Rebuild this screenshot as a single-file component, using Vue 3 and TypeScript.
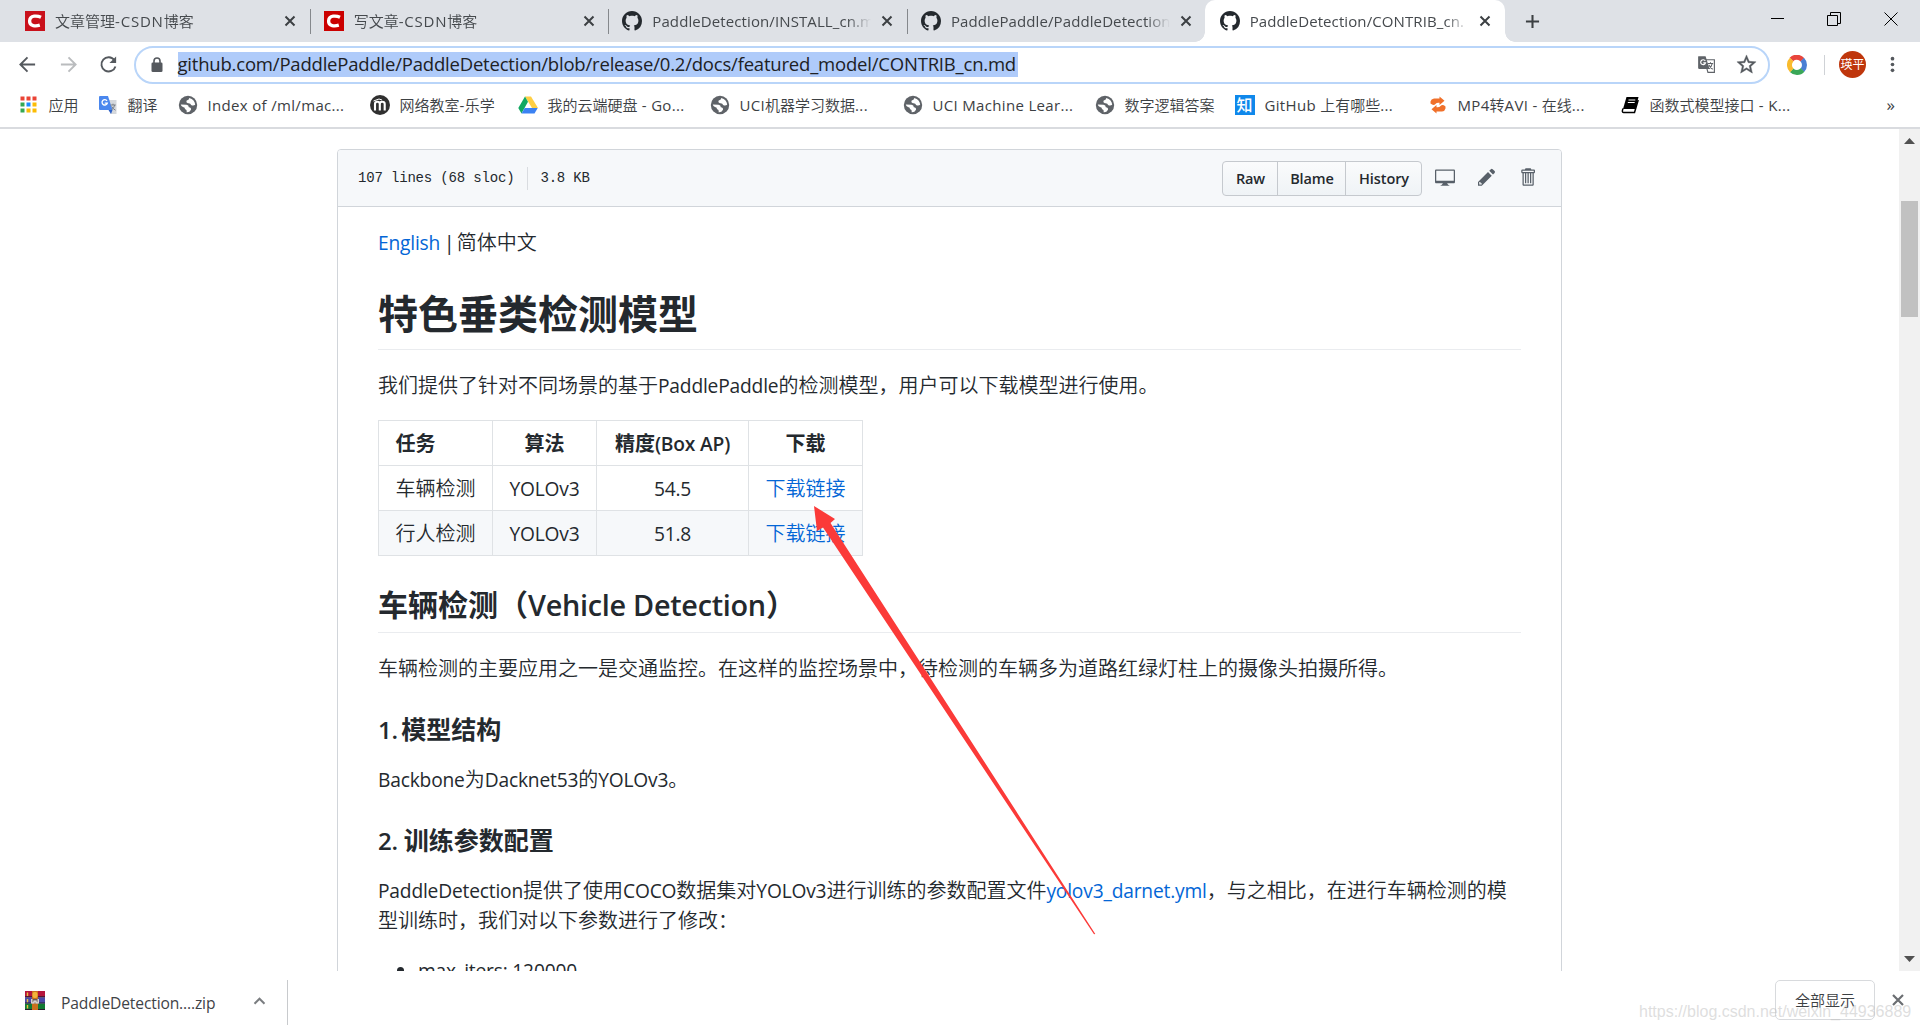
<script setup lang="ts">
import { h } from 'vue'

type IconName = 'apps' | 'gtrans' | 'globe' | 'moodle' | 'drive' | 'zhihu' | 'convert' | 'book'
interface Tab { title: string; icon: 'csdn' | 'csdn2' | 'github'; active?: boolean; sep?: boolean }
interface Bookmark { label: string; icon: IconName; width: number }

// Wraps the Latin runs of a mixed string so they can be sized apart from the CJK glyphs.
const Mix = (props: { t: string }) =>
  props.t.split(/([\x20-\x7e]+)/).filter(Boolean).map((run) =>
    /^[\x20-\x7e]+$/.test(run) ? h('span', { class: 'lat' }, run) : h('span', { class: 'cjk' }, run))
Mix.props = ['t']

const tabs: Tab[] = [
  { title: '文章管理-CSDN博客', icon: 'csdn' },
  { title: '写文章-CSDN博客', icon: 'csdn2', sep: true },
  { title: 'PaddleDetection/INSTALL_cn.m', icon: 'github', sep: true },
  { title: 'PaddlePaddle/PaddleDetection', icon: 'github', sep: true },
  { title: 'PaddleDetection/CONTRIB_cn.', icon: 'github', active: true },
]

const bookmarks: Bookmark[] = [
  { label: '应用', icon: 'apps', width: 79 },
  { label: '翻译', icon: 'gtrans', width: 80 },
  { label: 'Index of /ml/mac...', icon: 'globe', width: 192 },
  { label: '网络教室-乐学', icon: 'moodle', width: 148 },
  { label: '我的云端硬盘 - Go...', icon: 'drive', width: 192 },
  { label: 'UCI机器学习数据...', icon: 'globe', width: 193 },
  { label: 'UCI Machine Lear...', icon: 'globe', width: 192 },
  { label: '数字逻辑答案', icon: 'globe', width: 140 },
  { label: 'GitHub 上有哪些...', icon: 'zhihu', width: 193 },
  { label: 'MP4转AVI - 在线...', icon: 'convert', width: 192 },
  { label: '函数式模型接口 - K...', icon: 'book', width: 200 },
]

const rows = [
  { task: '车辆检测', algo: 'YOLOv3', ap: '54.5' },
  { task: '行人检测', algo: 'YOLOv3', ap: '51.8' },
]

const appColors = ['#ea4335', '#ea4335', '#ea4335', '#34a853', '#1a8cff', '#fbbc05', '#34a853', '#fbbc05', '#fbbc05']
const githubMark = 'M8 0C3.58 0 0 3.58 0 8c0 3.54 2.29 6.53 5.47 7.59.4.07.55-.17.55-.38 0-.19-.01-.82-.01-1.49-2.01.37-2.53-.49-2.69-.94-.09-.23-.48-.94-.82-1.13-.28-.15-.68-.52-.01-.53.63-.01 1.08.58 1.23.82.72 1.21 1.87.87 2.33.66.07-.52.28-.87.51-1.07-1.78-.2-3.64-.89-3.64-3.95 0-.87.31-1.59.82-2.15-.08-.2-.36-1.02.08-2.12 0 0 .67-.21 2.2.82.64-.18 1.32-.27 2-.27.68 0 1.36.09 2 .27 1.53-1.04 2.2-.82 2.2-.82.44 1.1.16 1.92.08 2.12.51.56.82 1.27.82 2.15 0 3.07-1.87 3.75-3.65 3.95.29.25.54.73.54 1.48 0 1.07-.01 1.93-.01 2.2 0 .21.15.46.55.38A8.013 8.013 0 0 0 16 8c0-4.42-3.58-8-8-8z'
</script>

<template>
  <div class="window">
    <div class="tabstrip">
      <div v-for="(tab, i) in tabs" :key="i" class="tab" :class="{ active: tab.active }">
        <i class="tab-sep" :class="{ on: tab.sep }"></i>
        <svg v-if="tab.icon !== 'github'" class="fav" viewBox="0 0 20 20">
          <rect width="20" height="20" :fill="tab.icon === 'csdn' ? '#c9101b' : '#cb0000'" />
          <path d="M16 6.200C12.500 4.600 5 3.900 4.600 9.800C4.300 15.500 11 15.300 14.800 14.200" fill="none" stroke="#fff" stroke-width="3.300" />
        </svg>
        <svg v-else class="fav" viewBox="0 0 16 16"><path :d="githubMark" fill="#24292e" /></svg>
        <span class="tab-title" :class="{ zh: tab.icon !== 'github' }"><Mix :t="tab.title" /></span>
        <svg class="tab-x" viewBox="0 0 12 12"><path d="M1.500 1.500L10.500 10.500M10.500 1.500L1.500 10.500" stroke="#3c4043" stroke-width="2" /></svg>
      </div>
      <svg class="newtab" viewBox="0 0 16 16"><path d="M8 1V15M1 8H15" stroke="#3c4043" stroke-width="2.200" /></svg>
      <div class="winctl">
        <svg width="14" height="14" viewBox="0 0 14 14"><path d="M1 6.500H14" stroke="#000" /></svg>
        <svg width="14" height="14" viewBox="0 0 14 14"><path d="M.5 3.500H10.500V13.500H.5ZM3.500 3.500V.5H13.500V11.500H10.500" fill="none" stroke="#000" /></svg>
        <svg width="14" height="14" viewBox="0 0 14 14"><path d="M.5 .5L13.500 13.500M13.500 .5L.5 13.500" stroke="#000" /></svg>
      </div>
    </div>

    <div class="toolbar">
      <svg class="nav" viewBox="0 0 20 20"><path d="M18 10H3M10 2.500L2.500 10L10 17.500" fill="none" stroke="#55595e" stroke-width="2" /></svg>
      <svg class="nav" viewBox="0 0 20 20"><path d="M2 10H17M10 2.500L17.500 10L10 17.500" fill="none" stroke="#babcbe" stroke-width="2" /></svg>
      <svg class="nav" viewBox="0 0 20 20"><path d="M16.200 5.500A7.500 7.500 0 1 0 17.300 12" fill="none" stroke="#55595e" stroke-width="2" /><path d="M18 1.500V8.500H11Z" fill="#55595e" /></svg>
      <div class="omnibox">
        <svg class="lock" viewBox="0 0 12 16"><rect x=".5" y="5.500" width="11" height="9.500" rx="1.300" fill="#55595e" /><path d="M3 6V4a3 3 0 0 1 6 0V6" fill="none" stroke="#55595e" stroke-width="1.600" /></svg>
        <span class="url"><Mix t="github.com/PaddlePaddle/PaddleDetection/blob/release/0.2/docs/featured_model/CONTRIB_cn.md" /></span>
        <svg class="otrans" viewBox="0 0 20 20">
          <path d="M8 5H18.300V18.300H11.500Z" fill="#fff" stroke="#5f6368" stroke-width="1.200" />
          <path d="M1.500 1.200H9L13.300 14.800H2.500Q1.200 14.800 1.200 13.500V2Q1.200 1.200 1.500 1.200Z" fill="#5f6368" />
          <path d="M8.700 6.200A2.600 2.600 0 1 0 9 8.300H6.600" fill="none" stroke="#fff" stroke-width="1.200" />
          <path d="M11.500 9H17M14.200 7.500V9M16 9Q15 13 12.500 14.500M12.600 10.500Q14 13.500 16.500 15" fill="none" stroke="#5f6368" stroke-width="1.100" />
        </svg>
        <svg class="star" viewBox="0 0 24 24"><path d="M22 9.240l-7.190-.62L12 2 9.190 8.630 2 9.240l5.460 4.730L5.820 21 12 17.270 18.180 21l-1.630-7.030L22 9.240zM12 15.400l-3.760 2.270 1-4.280-3.320-2.880 4.380-.38L12 6.100l1.710 4.040 4.380.38-3.320 2.880 1 4.280L12 15.400z" fill="#55595e" stroke="#55595e" stroke-width=".4" /></svg>
      </div>
      <svg class="ring" viewBox="0 0 20 20" fill="none" stroke-width="5">
        <path d="M4.400 4.400A7.500 7.500 0 0 1 15.500 4.900" stroke="#e8453c" />
        <path d="M15.200 4.600A7.500 7.500 0 0 1 15.300 15.300" stroke="#4a7fd4" />
        <path d="M15.500 15A7.500 7.500 0 0 1 4.600 15.200" stroke="#3aa757" />
        <path d="M4.800 15.400A7.500 7.500 0 0 1 4.700 4.600" stroke="#f9bb2d" />
      </svg>
      <i class="tsep"></i>
      <span class="avatar">瑛平</span>
      <svg class="menu" viewBox="0 0 6 20" fill="#55595e"><circle cx="3" cy="3" r="2.200" /><circle cx="3" cy="10" r="2.200" /><circle cx="3" cy="17" r="2.200" /></svg>
    </div>

    <div class="bookmarks">
      <div v-for="(b, i) in bookmarks" :key="i" class="bm" :style="{ width: b.width + 'px' }">
        <svg v-if="b.icon === 'apps'" class="bi" viewBox="0 0 20 20">
          <rect v-for="(c, n) in appColors" :key="n" :x="1.500 + (n % 3) * 6" :y="1.500 + Math.floor(n / 3) * 6" width="4" height="4" :fill="c" />
        </svg>
        <svg v-else-if="b.icon === 'gtrans'" class="bi" viewBox="0 0 20 20">
          <path d="M8 5H18.500V19H12.500Z" fill="#d5d8dc" />
          <path d="M2 1H10L14.500 15H2Q1 15 1 14V2Q1 1 2 1Z" fill="#4a87ee" />
          <path d="M14.500 15L10.500 15L13 19Z" fill="#2a5fc7" />
          <path d="M9 5.800A2.700 2.700 0 1 0 9.300 8.200H6.700" fill="none" stroke="#fff" stroke-width="1.300" />
          <path d="M12.500 10H17.700M15 8.700V10M16.700 10Q16 13 13.500 15M13.700 11.500Q15 14 17.500 15.200" fill="none" stroke="#7b8087" stroke-width="1" />
        </svg>
        <svg v-else-if="b.icon === 'globe'" class="bi" viewBox="0 0 20 20">
          <circle cx="10" cy="10" r="9.200" fill="#5f6368" />
          <path d="M2.800 9.600L8.500 9.800Q10.800 10.200 10.800 12.300Q13.400 12.600 13 14.700Q11.700 17.400 8.600 17.200Q9.200 14.600 7 14.200Q7.300 12.200 5 12Q3 11.600 2.800 9.600Z" fill="#fff" />
          <path d="M11.300 2.900Q11 5 8.700 5.600Q7.700 7.800 10 8.200Q12.500 7.800 13.100 9.900Q15.200 11.200 17.200 9.700Q16.800 4.700 11.300 2.900Z" fill="#fff" />
        </svg>
        <svg v-else-if="b.icon === 'moodle'" class="bi" viewBox="0 0 20 20">
          <circle cx="10" cy="10" r="10" fill="#303030" />
          <path d="M5 15.500V9Q5 6.800 7.300 6.800Q9.800 6.800 9.800 9V15.500M9.800 9Q9.800 6.800 12.200 6.800Q14.700 6.800 14.700 9V15.500" fill="none" stroke="#fff" stroke-width="2.100" />
          <path d="M3.500 6L9 4L12 5" fill="none" stroke="#fff" />
        </svg>
        <svg v-else-if="b.icon === 'drive'" class="bi" viewBox="0 0 20 20">
          <path d="M7 1.500H13L20 13H14Z" fill="#ffcf44" /><path d="M7 1.500L10 6.800L3.500 18.500L.3 13Z" fill="#11a861" /><path d="M6.700 13H19.700L16.500 18.500H3.500Z" fill="#3b82f3" />
        </svg>
        <span v-else-if="b.icon === 'zhihu'" class="bi zhihu">知</span>
        <svg v-else-if="b.icon === 'convert'" class="bi" viewBox="0 0 20 20">
          <path d="M2.500 8.500V6.500Q3 4 6 3.500H11.500V1.500L16.500 5.800L11.500 10V7.800Q8.500 7.500 7.500 9Q5.500 11 2.500 8.500Z" fill="#f0702a" />
          <path d="M17.500 11.500V13.500Q17 16 14 16.500H8.500V18.500L3.500 14.200L8.500 10V12.200Q11.500 12.500 12.500 11Q14.500 9 17.500 11.500Z" fill="#f0702a" />
        </svg>
        <svg v-else class="bi" viewBox="0 0 20 20">
          <path d="M6.500 2H18.500L15.500 14H3Z" fill="#000" /><path d="M3 13.500Q1.500 17.500 3.500 17.500H14.500L18.200 5" fill="none" stroke="#000" stroke-width="1.500" /><path d="M8.500 5H15.300M7.800 7.500H14.700" stroke="#fff" stroke-width="1" />
        </svg>
        <span class="bl"><Mix :t="b.label" /></span>
      </div>
      <span class="more">»</span>
    </div>

    <div class="viewport">
      <div class="page">
        <div class="box">
          <div class="box-head">
            <span class="mono">107 lines (68 sloc)</span><i class="fsep"></i><span class="mono">3.8 KB</span>
            <div class="btns"><span class="btn b1">Raw</span><span class="btn b2">Blame</span><span class="btn b3">History</span></div>
            <svg class="oct desktop" viewBox="0 0 16 16"><path d="M15 2H1c-.55 0-1 .45-1 1v9c0 .55.45 1 1 1h5.340c-.25.61-.86 1.390-2.340 2h8c-1.480-.61-2.090-1.390-2.340-2H15c.55 0 1-.45 1-1V3c0-.55-.45-1-1-1zm0 9H1V3h14v8z" /></svg>
            <svg class="oct pencil" viewBox="0 0 14 16"><path d="M0 12v3h3l8-8-3-3-8 8zm3 2H1v-2h1v1h1v1zm10.300-9.300L12 6 9 3l1.300-1.300a.996.996 0 0 1 1.410 0l1.590 1.590c.39.39.39 1.020 0 1.410z" /></svg>
            <svg class="oct trash" viewBox="0 0 12 16"><path d="M11 2H9c0-.55-.45-1-1-1H5c-.55 0-1 .45-1 1H2c-.55 0-1 .45-1 1v1c0 .55.45 1 1 1v9c0 .55.45 1 1 1h7c.55 0 1-.45 1-1V5c.55 0 1-.45 1-1V3c0-.55-.45-1-1-1zm-1 12H3V5h1v8h1V5h1v8h1V5h1v8h1V5h1v9zm1-10H2V3h9v1z" /></svg>
          </div>
          <article class="md">
            <p class="langs"><a><Mix t="English" /></a><span class="bar"> | </span><Mix t="简体中文" /></p>
            <h1>特色垂类检测模型</h1>
            <p><Mix t="我们提供了针对不同场景的基于PaddlePaddle的检测模型，用户可以下载模型进行使用。" /></p>
            <table>
              <thead><tr><th>任务</th><th>算法</th><th><Mix t="精度(Box AP)" /></th><th>下载</th></tr></thead>
              <tbody>
                <tr v-for="r in rows" :key="r.task">
                  <td><Mix :t="r.task" /></td><td><Mix :t="r.algo" /></td><td><Mix :t="r.ap" /></td><td><a><Mix t="下载链接" /></a></td>
                </tr>
              </tbody>
            </table>
            <h2><Mix t="车辆检测（Vehicle Detection）" /></h2>
            <p><Mix t="车辆检测的主要应用之一是交通监控。在这样的监控场景中，待检测的车辆多为道路红绿灯柱上的摄像头拍摄所得。" /></p>
            <h3 class="first"><Mix t="1. 模型结构" /></h3>
            <p><Mix t="Backbone为Dacknet53的YOLOv3。" /></p>
            <h3><Mix t="2. 训练参数配置" /></h3>
            <p><Mix t="PaddleDetection提供了使用COCO数据集对YOLOv3进行训练的参数配置文件" /><a><Mix t="yolov3_darnet.yml" /></a><Mix t="，与之相比，在进行车辆检测的模" /><br /><Mix t="型训练时，我们对以下参数进行了修改：" /></p>
            <ul><li><Mix t="max_iters: 120000" /></li></ul>
          </article>
        </div>
      </div>
      <div class="scroll">
        <svg width="11" height="6" viewBox="0 0 11 6"><path d="M5.500 0L11 6H0Z" fill="#505050" /></svg>
        <i class="thumb"></i>
        <svg class="down" width="11" height="6" viewBox="0 0 11 6"><path d="M0 0H11L5.500 6Z" fill="#505050" /></svg>
      </div>
    </div>

    <div class="shelf">
      <svg class="zip" viewBox="0 0 20 19">
        <rect width="20" height="6.300" fill="#b5153c" /><rect y="6.300" width="20" height="6.300" fill="#4a4aa8" /><rect y="12.600" width="20" height="6.400" fill="#127a33" />
        <path d="M0 5.800H20M0 12H20M0 18.500H20" stroke="#2b1a2e" /><path d="M2.500 1.500V5M2.500 8V11.300M2.500 14V17.500" stroke="#e8c040" stroke-width="1.400" />
        <rect x="7" width="6" height="19" fill="#c9701d" /><rect x="7.500" y="1" width="5" height="6" rx="2" fill="#f3b53a" />
        <rect x="6" y="8" width="8" height="4.500" fill="#6a5a50" /><path d="M6.800 8V12H9V10H11V12H13.200V8" fill="none" stroke="#f2f2f2" stroke-width="1.200" />
      </svg>
      <span class="fname"><Mix t="PaddleDetection....zip" /></span>
      <svg class="caret" viewBox="0 0 12 8"><path d="M1 6.700L6 1.700L11 6.700" fill="none" stroke="#7a7d80" stroke-width="2" /></svg>
      <i class="ssep"></i>
      <span class="showall"><Mix t="全部显示" /></span>
      <svg class="sx" viewBox="0 0 12 12"><path d="M1 1L11 11M11 1L1 11" stroke="#6b6e72" stroke-width="2.200" /></svg>
    </div>

    <svg class="arrow" viewBox="814 506 282 429"><path d="M814 506L835 519L830.500 523L1095.300 934L1094 934.300L823 527.500L817 531Z" fill="#fb3a38" /></svg>
    <span class="watermark">https://blog.csdn.net/weixin_44936889</span>
  </div>
</template>

<style>
body { margin: 0; overflow: hidden; }
.lat { font-size: .96em; letter-spacing: -.0095em; white-space: pre; }
.cjk { font-weight: 350; }
h2 .cjk, h3 .cjk, th .cjk { font-weight: inherit; }
.tab-title .lat { font-size: 1em; letter-spacing: .1px; }
.tab-title.zh .lat { letter-spacing: .8px; }
.bl .lat { font-size: 1em; letter-spacing: .33px; }
.url .lat { font-size: 1em; letter-spacing: -.2px; }
h3.first .lat { word-spacing: -2.500px; }
</style>

<style scoped>
.window { position: relative; width: 1920px; height: 1030px; overflow: hidden; display: flex; flex-direction: column; background: #fff; color: #24292e; font-family: "Open Sans", "Noto Sans CJK SC", sans-serif; white-space: nowrap; }
svg { display: block; flex: none; }
i { display: block; flex: none; }
.tabstrip { height: 42px; flex: none; display: flex; align-items: center; padding-left: 10px; background: #dee1e6; }
.tab { position: relative; width: 298.670px; height: 42px; flex: none; display: flex; align-items: center; box-sizing: border-box; }
.tab.active { width: 300px; background: #fff; border-radius: 10px 10px 0 0; }
.tab.active::before, .tab.active::after { content: ""; position: absolute; bottom: 0; width: 10px; height: 10px; }
.tab.active::before { left: -10px; background: radial-gradient(circle at 0 0, transparent 9.500px, #fff 10px); }
.tab.active::after { right: -10px; background: radial-gradient(circle at 100% 0, transparent 9.500px, #fff 10px); }
.tab-sep { width: 1px; height: 25px; margin-left: 1px; }
.tab-sep.on { background: #85888c; }
.fav { width: 20px; height: 20px; margin-left: 13px; }
.tab-title { width: 220px; margin-left: 10px; overflow: hidden; font-size: 15px; line-height: 24px; color: #45494d; -webkit-mask-image: linear-gradient(90deg, #000 195px, transparent 219px); mask-image: linear-gradient(90deg, #000 195px, transparent 219px); }
.tab-x { width: 12px; height: 12px; margin-left: 9px; }
.newtab { width: 15px; height: 15px; margin-left: 20px; }
.winctl { margin-left: auto; margin-right: 22px; height: 37px; align-self: flex-start; display: flex; align-items: center; gap: 43px; }
.toolbar { height: 45px; flex: none; display: flex; align-items: center; padding-left: 18px; box-sizing: border-box; }
.nav { width: 19px; height: 19px; margin-right: 21.500px; }
.omnibox { box-sizing: border-box; width: 1636px; height: 38px; margin-left: -5.500px; border: 2.500px solid #b9d5f9; border-radius: 19px; display: flex; align-items: center; padding-left: 15px; }
.lock { width: 12px; height: 16px; }
.url { box-sizing: border-box; width: 840px; margin-left: 14.500px; background: #afcbfa; font-size: 18.500px; line-height: 24px; height: 25px; color: #202124; }
.otrans { width: 19px; height: 19px; margin-left: auto; }
.star { width: 23px; height: 23px; margin-left: 19px; margin-right: 10.500px; }
.ring { width: 20px; height: 20px; margin-left: 17px; }
.tsep { width: 1px; height: 20px; margin-left: 17px; background: #cfd2d6; }
.avatar { width: 27px; height: 27px; margin-left: 14px; border-radius: 50%; background: #bf360c; color: #fff; font-size: 12px; line-height: 26px; text-align: center; font-family: "Noto Sans CJK SC", sans-serif; }
.menu { width: 5px; height: 17px; margin-left: 23.500px; }
.bookmarks { height: 42px; flex: none; box-sizing: border-box; padding: 0 0 4px 18.500px; display: flex; align-items: center; border-bottom: 2px solid #d9dbdf; }
.bm { flex: none; display: flex; align-items: center; }
.bi { width: 20px; height: 20px; flex: none; }
.zhihu { background: #0f88eb; color: #fff; font: 500 16px/19px "Noto Sans CJK SC", sans-serif; text-align: center; }
.bl { margin-left: 10px; font-size: 15px; line-height: 22px; color: #3c4043; }
.more { margin-left: auto; margin-right: 25px; font-size: 17px; line-height: 20px; color: #3c4043; }
.viewport { flex: none; height: 842px; display: flex; overflow: hidden; }
.page { width: 1899px; height: 842px; overflow: hidden; }
.box { width: 1223px; height: 900px; margin: 20px 0 0 337px; border: 1px solid #d1d5da; border-radius: 4px; }
.box-head { height: 56px; display: flex; align-items: center; padding-left: 20px; background: #f6f8fa; border-bottom: 1px solid #d1d5da; border-radius: 3px 3px 0 0; }
.mono { font-family: "Liberation Mono", monospace; font-size: 14px; letter-spacing: -.17px; line-height: 20px; }
.fsep { width: 1px; height: 23px; margin: 0 12.500px 0 12.500px; background: #d9dce0; }
.btns { margin-left: auto; display: flex; box-sizing: border-box; width: 200px; height: 35px; border: 1px solid #c5c9ce; border-radius: 4px; background: linear-gradient(#fafbfc, #eff3f6); }
.btn { box-sizing: border-box; padding-left: 2px; font-size: 14.500px; letter-spacing: -.1px; font-weight: 600; line-height: 33px; text-align: center; border-right: 1px solid #c5c9ce; }
.b1 { width: 55px; } .b2 { width: 68px; } .b3 { width: 75px; border-right: 0; }
.oct { fill: #586069; height: 20px; margin-bottom: 2px; }
.desktop { width: 20px; margin-left: 13.500px; }
.pencil { width: 17.500px; margin-left: 23px; }
.trash { width: 15px; margin-left: 24px; margin-right: 26.500px; }
.md { padding: 21px 40px; font-size: 20px; line-height: 30px; }
.md p { margin: 0; padding: 1px 0 19px; }
.md p.langs { padding: 0 0 20px; }
.bar { white-space: pre; letter-spacing: -1.600px; }
.md a { color: #0366d6; }
h1, h2, h3 { font-weight: 600; }
h1 { margin: 10px 0 20px; font-size: 40px; line-height: 50px; padding: 1px 0 10px; border-bottom: 1px solid #eaecef; font-weight: 700; }
h2 { margin: 30px 0 20px; font-size: 30px; line-height: 37px; padding-bottom: 9px; border-bottom: 1px solid #eaecef; }
h3 { margin: 10px 0 0; font-size: 25px; line-height: 31px; padding: 1px 0 19px; }
table { border-collapse: collapse; table-layout: fixed; width: 485px; margin: 0 0 20px; }
th, td { border: 1px solid #dfe2e5; padding: 8px 0 6px; height: 30px; text-align: center; box-sizing: content-box; }
th { font-weight: 600; }
th:nth-child(1) { width: 113px; } th:nth-child(2) { width: 103px; } th:nth-child(3) { width: 151px; } th:nth-child(4) { width: 113px; }
th:first-child { text-align: left; padding-left: 16.500px; width: 96.500px; }
tbody tr:nth-child(2) { background: #f6f8fa; }
ul { margin: 0; padding: 1px 0 0 40px; }
.scroll { width: 21px; height: 842px; background: #f1f1f1; display: flex; flex-direction: column; align-items: center; padding: 9px 0; box-sizing: border-box; }
.thumb { width: 17px; height: 116px; margin-top: 57px; background: #c1c1c1; }
.down { margin-top: auto; }
.shelf { height: 59px; flex: none; display: flex; align-items: center; background: #fff; padding-left: 25px; }
.zip { width: 20px; height: 19px; }
.fname { margin: 5px 0 0 16px; width: 192px; font-size: 16.300px; line-height: 24px; color: #3f4347; }
.caret { width: 13px; height: 8px; }
.ssep { width: 1px; height: 45px; margin: 3px 0 0 21px; background: #c8cacd; }
.showall { box-sizing: border-box; width: 100px; height: 40px; margin: 0 0 1px auto; border: 1px solid #d8dadd; border-radius: 5px; text-align: center; font-size: 15px; line-height: 38px; color: #3c4043; }
.sx { width: 12px; height: 12px; margin: 0 16.500px 2px 16.500px; }
.arrow { position: absolute; left: 814px; top: 506px; width: 282px; height: 429px; }
.watermark { position: absolute; left: 1639px; top: 1001px; font: 16px/22px "Liberation Sans", sans-serif; color: rgba(190, 190, 190, .5); }
</style>
